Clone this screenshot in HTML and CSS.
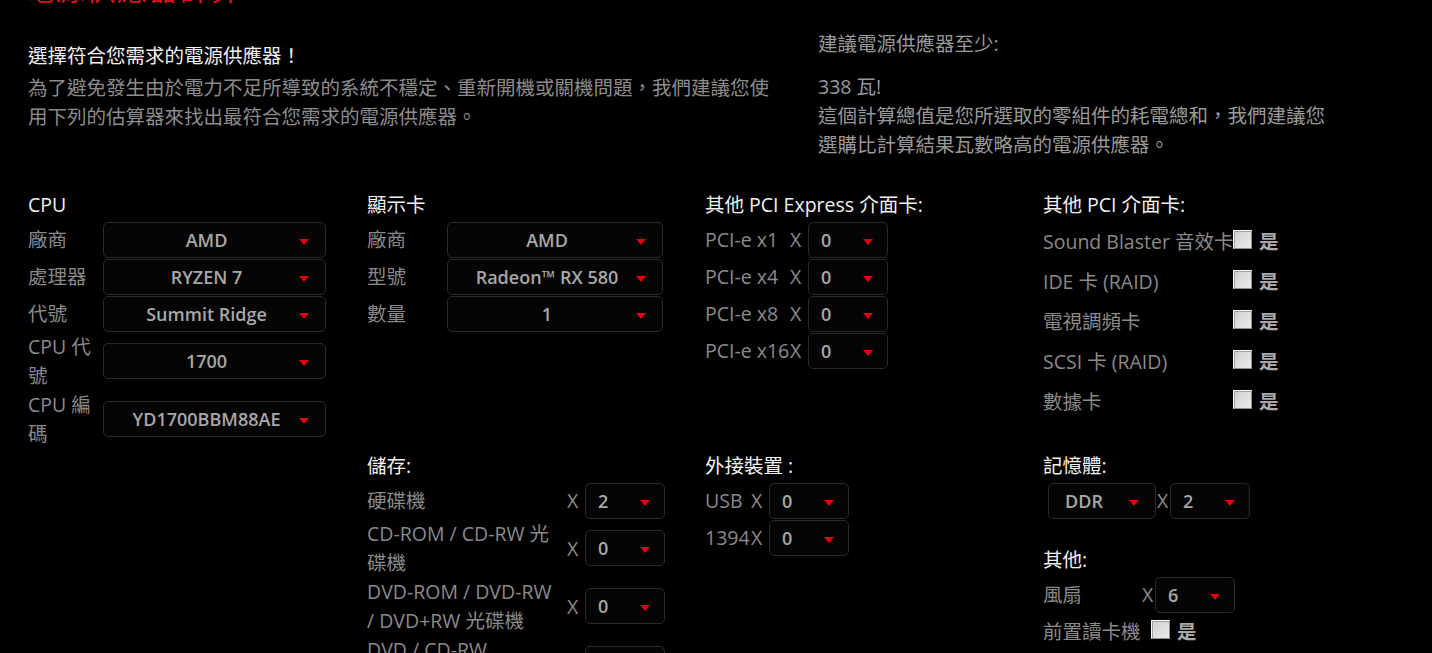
FILE: index.html
```html
<!DOCTYPE html>
<html lang="zh-Hant">
<head>
  <meta charset="UTF-8">
  <meta name="viewport" content="width=device-width, initial-scale=1.0">
  <title>電源供應器計算</title>
  <link rel="stylesheet" href="styles.css">
</head>
<body>
  <h1 class="page-title">電源供應器計算</h1>

  <div class="intro">
    <div class="intro-main">
      <h2>選擇符合您需求的電源供應器！</h2>
      <p>為了避免發生由於電力不足所導致的系統不穩定、重新開機或關機問題，我們建議您使用下列的估算器來找出最符合您需求的電源供應器。</p>
    </div>
    <div class="intro-result">
      <p>建議電源供應器至少:</p>
      <p class="watts">338 瓦!</p>
      <p class="result-note">這個計算總值是您所選取的零組件的耗電總和，我們建議您選購比計算結果瓦數略高的電源供應器。</p>
    </div>
  </div>

  <div class="calc">
    <!-- CPU -->
    <section class="group cpu">
      <h3>CPU</h3>
      <div class="field">
        <span class="field-label">廠商</span>
        <label class="select wide"><select><option>AMD</option></select></label>
      </div>
      <div class="field">
        <span class="field-label">處理器</span>
        <label class="select wide"><select><option>RYZEN 7</option></select></label>
      </div>
      <div class="field">
        <span class="field-label">代號</span>
        <label class="select wide"><select><option>Summit Ridge</option></select></label>
      </div>
      <div class="field">
        <span class="field-label">CPU 代號</span>
        <label class="select wide"><select><option>1700</option></select></label>
      </div>
      <div class="field">
        <span class="field-label">CPU 編碼</span>
        <label class="select wide"><select><option>YD1700BBM88AE</option></select></label>
      </div>
    </section>

    <!-- 顯示卡 -->
    <section class="group gpu">
      <h3>顯示卡</h3>
      <div class="field">
        <span class="field-label">廠商</span>
        <label class="select wide"><select><option>AMD</option></select></label>
      </div>
      <div class="field">
        <span class="field-label">型號</span>
        <label class="select wide"><select><option>Radeon™ RX 580</option></select></label>
      </div>
      <div class="field">
        <span class="field-label">數量</span>
        <label class="select wide"><select><option>1</option></select></label>
      </div>
    </section>

    <!-- PCI Express -->
    <section class="group pcie">
      <h3>其他 PCI Express 介面卡:</h3>
      <div class="field">
        <span class="field-label">PCI-e x1</span><span class="times">X</span>
        <label class="select small"><select><option>0</option></select></label>
      </div>
      <div class="field">
        <span class="field-label">PCI-e x4</span><span class="times">X</span>
        <label class="select small"><select><option>0</option></select></label>
      </div>
      <div class="field">
        <span class="field-label">PCI-e x8</span><span class="times">X</span>
        <label class="select small"><select><option>0</option></select></label>
      </div>
      <div class="field">
        <span class="field-label">PCI-e x16</span><span class="times">X</span>
        <label class="select small"><select><option>0</option></select></label>
      </div>
    </section>

    <!-- PCI -->
    <section class="group pci">
      <h3>其他 PCI 介面卡:</h3>
      <label class="check-row"><span class="field-label">Sound Blaster 音效卡</span><input type="checkbox"><b>是</b></label>
      <label class="check-row"><span class="field-label">IDE 卡 (RAID)</span><input type="checkbox"><b>是</b></label>
      <label class="check-row"><span class="field-label">電視調頻卡</span><input type="checkbox"><b>是</b></label>
      <label class="check-row"><span class="field-label">SCSI 卡 (RAID)</span><input type="checkbox"><b>是</b></label>
      <label class="check-row"><span class="field-label">數據卡</span><input type="checkbox"><b>是</b></label>
    </section>

    <div class="group"></div>

    <!-- 儲存 -->
    <section class="group storage second">
      <h3>儲存:</h3>
      <div class="field">
        <span class="field-label">硬碟機</span><span class="times">X</span>
        <label class="select small"><select><option>2</option></select></label>
      </div>
      <div class="field">
        <span class="field-label">CD-ROM / CD-RW 光碟機</span><span class="times">X</span>
        <label class="select small"><select><option>0</option></select></label>
      </div>
      <div class="field">
        <span class="field-label">DVD-ROM / DVD-RW / DVD+RW 光碟機</span><span class="times">X</span>
        <label class="select small"><select><option>0</option></select></label>
      </div>
      <div class="field">
        <span class="field-label">DVD / CD-RW COMBO 光碟機</span><span class="times">X</span>
        <label class="select small"><select><option>0</option></select></label>
      </div>
    </section>

    <!-- 外接裝置 -->
    <section class="group external second">
      <h3>外接裝置 :</h3>
      <div class="field">
        <span class="field-label">USB</span><span class="times">X</span>
        <label class="select small"><select><option>0</option></select></label>
      </div>
      <div class="field">
        <span class="field-label">1394</span><span class="times">X</span>
        <label class="select small"><select><option>0</option></select></label>
      </div>
    </section>

    <!-- 記憶體 / 其他 -->
    <section class="group memory second">
      <h3>記憶體:</h3>
      <div class="field">
        <label class="select ram"><select><option>DDR</option></select></label>
        <span class="times">X</span>
        <label class="select small"><select><option>2</option></select></label>
      </div>

      <h3 class="other-title">其他:</h3>
      <div class="field">
        <span class="field-label">風扇</span><span class="times">X</span>
        <label class="select small"><select><option>6</option></select></label>
      </div>
      <label class="check-row">
        <span class="field-label">前置讀卡機</span><input type="checkbox"><b>是</b>
      </label>
    </section>
  </div>
</body>
</html>
```

FILE: styles.css
```css
body {
  margin: 0;
  background: #000;
  color: #8a8a8a;
  font-family: 'Open Sans', 'Noto Sans CJK TC', sans-serif;
  font-size: 19.5px;
  line-height: 29px;
  overflow: hidden;
}

.page-title {
  margin: -30px 0 21px 24px;
  color: #d7141a;
  font-size: 30px;
  line-height: 38px;
  font-weight: 400;
  letter-spacing: 1px;
}

.intro {
  display: flex;
  padding-left: 28px;
}

.intro-main {
  width: 752px;
  margin-right: 38px;
  padding-top: 12px;
}

.intro-main h2 {
  margin: 0 0 3px;
  color: #f0f0f0;
  font-size: 19.5px;
  font-weight: 400;
}

.intro-main p {
  margin: 0;
  color: #8c8c8c;
}

.intro-result {
  width: 515px;
  color: #999;
}

.intro-result p {
  margin: 0;
}

.intro-result .watts {
  margin-top: 14px;
}

.calc {
  display: grid;
  grid-template-columns: 339px 338px 338px 338px;
  margin-top: 31px;
  padding-left: 28px;
}

.group.second {
  padding-top: 3px;
}

.group h3 {
  margin: 0 0 2px;
  color: #f2f2f2;
  font-size: 19.5px;
  font-weight: 400;
}

.field {
  display: flex;
  align-items: center;
  min-height: 37px;
}

.field-label {
  flex: none;
}

.cpu .field-label {
  width: 75px;
}

.gpu .field-label {
  width: 80px;
}

.pcie .field-label {
  width: 85px;
}

.storage .field-label {
  width: 186px;
}

.storage .times {
  margin-left: 14px;
}

.external .field-label {
  width: 46px;
}

.memory .field-label {
  width: 98px;
}

.times {
  flex: none;
  width: 16px;
  color: #8a8a8a;
}

.select {
  position: relative;
  display: block;
  flex: none;
  height: 36px;
  box-sizing: border-box;
  border: 1px solid #2a2a2a;
  border-radius: 5px;
  background: #050505;
}

.select::after {
  content: "";
  position: absolute;
  top: 16px;
  right: 16px;
  border-left: 5px solid transparent;
  border-right: 5px solid transparent;
  border-top: 6px solid #e3000f;
}

.select select {
  appearance: none;
  width: 100%;
  height: 100%;
  padding: 0 12px;
  border: 0;
  background: transparent;
  color: #a8a8a8;
  font-family: 'Open Sans', 'Noto Sans CJK TC', sans-serif;
  font-size: 18px;
  font-weight: 600;
  outline: none;
}

.select.wide {
  width: 223px;
}

.gpu .select.wide {
  width: 216px;
}

.select.wide select {
  padding-right: 28px;
  text-align-last: center;
}

.select.small {
  width: 80px;
  margin-left: 2px;
}

.select.small::after {
  right: 14px;
}

.select.ram {
  width: 108px;
  margin-left: 5px;
}

.select.ram select {
  padding-left: 16px;
}

.memory .field .times {
  width: 11px;
  margin-left: 1px;
  overflow: hidden;
}

.other-title {
  margin-top: 26px !important;
}

.check-row {
  display: flex;
  align-items: center;
  height: 40px;
}

.pci .field-label {
  width: 190px;
  white-space: nowrap;
}

.check-row input {
  appearance: none;
  width: 19px;
  height: 19px;
  margin: -4px 0 0;
  box-sizing: border-box;
  border: 1px solid #8f8f8f;
  border-top-color: #fdfdfd;
  border-left-color: #fdfdfd;
  background: linear-gradient(135deg, #cfcfcf, #ececec);
  box-shadow: inset 1px 1px 0 #a0a0a0;
}

.check-row b {
  margin-left: 7px;
  color: #a8a8a8;
  font-weight: 700;
}

.memory .check-row {
  height: 37px;
}

.memory .check-row input {
  margin-left: 10px;
}
```
